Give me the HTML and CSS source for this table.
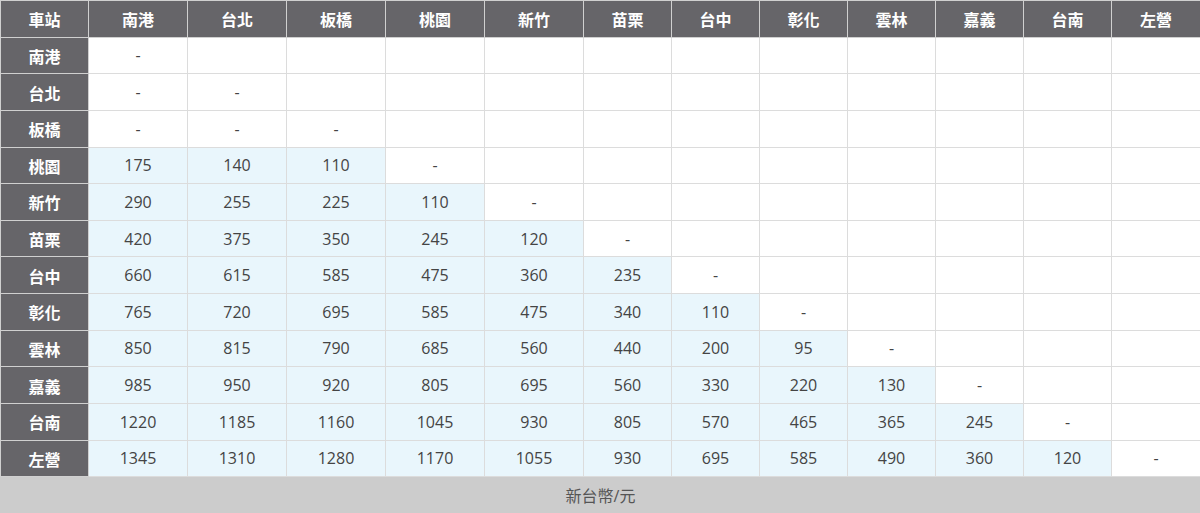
FILE: index.html
```html
<!DOCTYPE html>
<html lang="zh-Hant">
<head>
<meta charset="utf-8">
<title>票價表</title>
<link rel="stylesheet" href="styles.css">
</head>
<body>
<table class="fare">
  <colgroup>
    <col class="c-label">
    <col class="c-wide"><col class="c-wide"><col class="c-wide"><col class="c-wide"><col class="c-wide">
    <col class="c-narrow"><col class="c-narrow"><col class="c-narrow"><col class="c-narrow"><col class="c-narrow"><col class="c-narrow"><col class="c-last">
  </colgroup>
  <thead>
    <tr>
      <th>車站</th><th>南港</th><th>台北</th><th>板橋</th><th>桃園</th><th>新竹</th><th>苗栗</th><th>台中</th><th>彰化</th><th>雲林</th><th>嘉義</th><th>台南</th><th>左營</th>
    </tr>
  </thead>
  <tbody>
    <tr><th>南港</th><td>-</td><td></td><td></td><td></td><td></td><td></td><td></td><td></td><td></td><td></td><td></td><td></td></tr>
    <tr><th>台北</th><td>-</td><td>-</td><td></td><td></td><td></td><td></td><td></td><td></td><td></td><td></td><td></td><td></td></tr>
    <tr><th>板橋</th><td>-</td><td>-</td><td>-</td><td></td><td></td><td></td><td></td><td></td><td></td><td></td><td></td><td></td></tr>
    <tr><th>桃園</th><td class="p">175</td><td class="p">140</td><td class="p">110</td><td>-</td><td></td><td></td><td></td><td></td><td></td><td></td><td></td><td></td></tr>
    <tr><th>新竹</th><td class="p">290</td><td class="p">255</td><td class="p">225</td><td class="p">110</td><td>-</td><td></td><td></td><td></td><td></td><td></td><td></td><td></td></tr>
    <tr><th>苗栗</th><td class="p">420</td><td class="p">375</td><td class="p">350</td><td class="p">245</td><td class="p">120</td><td>-</td><td></td><td></td><td></td><td></td><td></td><td></td></tr>
    <tr><th>台中</th><td class="p">660</td><td class="p">615</td><td class="p">585</td><td class="p">475</td><td class="p">360</td><td class="p">235</td><td>-</td><td></td><td></td><td></td><td></td><td></td></tr>
    <tr><th>彰化</th><td class="p">765</td><td class="p">720</td><td class="p">695</td><td class="p">585</td><td class="p">475</td><td class="p">340</td><td class="p">110</td><td>-</td><td></td><td></td><td></td><td></td></tr>
    <tr><th>雲林</th><td class="p">850</td><td class="p">815</td><td class="p">790</td><td class="p">685</td><td class="p">560</td><td class="p">440</td><td class="p">200</td><td class="p">95</td><td>-</td><td></td><td></td><td></td></tr>
    <tr><th>嘉義</th><td class="p">985</td><td class="p">950</td><td class="p">920</td><td class="p">805</td><td class="p">695</td><td class="p">560</td><td class="p">330</td><td class="p">220</td><td class="p">130</td><td>-</td><td></td><td></td></tr>
    <tr><th>台南</th><td class="p">1220</td><td class="p">1185</td><td class="p">1160</td><td class="p">1045</td><td class="p">930</td><td class="p">805</td><td class="p">570</td><td class="p">465</td><td class="p">365</td><td class="p">245</td><td>-</td><td></td></tr>
    <tr><th>左營</th><td class="p">1345</td><td class="p">1310</td><td class="p">1280</td><td class="p">1170</td><td class="p">1055</td><td class="p">930</td><td class="p">695</td><td class="p">585</td><td class="p">490</td><td class="p">360</td><td class="p">120</td><td>-</td></tr>
  </tbody>
  <tfoot>
    <tr><td colspan="13" class="unit">新台幣/元</td></tr>
  </tfoot>
</table>
</body>
</html>
```

FILE: styles.css
```css
html, body {
  margin: 0;
  padding: 0;
  background: #ffffff;
}

.fare {
  width: 1200px;
  height: 513px;
  border-collapse: collapse;
  table-layout: fixed;
  font-family: "Open Sans", "Noto Sans CJK TC", sans-serif;
  font-size: 16px;
  color: #444444;
}

.c-label { width: 88px; }
.c-wide { width: 99px; }
.c-narrow { width: 88px; }
.c-last { width: 89px; }

.fare tr {
  height: 36.64px;
}

.fare th,
.fare td {
  padding: 0;
  text-align: center;
  vertical-align: middle;
  border: 1px solid #dcdcdc;
}

.fare th {
  background: #666569;
  color: #ffffff;
  font-family: "Noto Sans CJK TC", sans-serif;
  font-weight: 700;
  font-size: 16px;
  padding-top: 1px;
  border-color: #d0d0d0;
}

.fare td {
  background: #ffffff;
}

.fare td.p {
  background: #e9f6fc;
}

.fare td.unit {
  background: #cccccc;
  color: #555555;
  font-family: "Open Sans", "Noto Sans CJK TC", sans-serif;
  font-size: 16px;
  border-color: #cccccc;
}
```
